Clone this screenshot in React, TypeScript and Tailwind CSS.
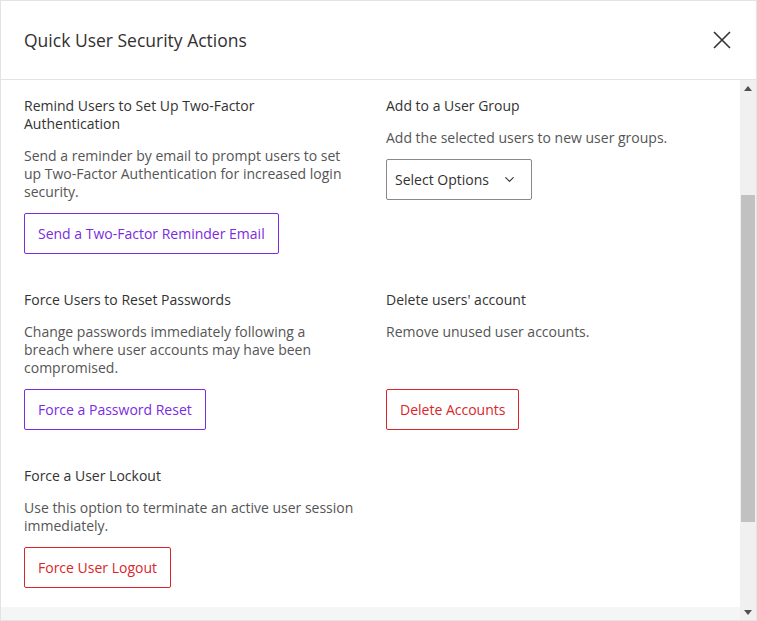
import { ChevronDown } from "lucide-react";

function Section({
  title,
  text,
  children,
  push,
}: {
  title: React.ReactNode;
  text: React.ReactNode;
  children: React.ReactNode;
  push?: boolean;
}) {
  return (
    <div className="flex flex-col">
      <h3 className="text-[14px] font-medium leading-[18px] text-[#333333]">{title}</h3>
      <p className="mt-[14px] text-[14px] leading-[18px] text-[#555555]">{text}</p>
      <div className={push ? "mt-auto pt-3" : "mt-3"}>{children}</div>
    </div>
  );
}

function OutlineButton({ label, tone }: { label: string; tone: "purple" | "red" }) {
  const cls =
    tone === "purple"
      ? "border-[#7b2be0] text-[#7b2be0]"
      : "border-[#d9262b] text-[#d9262b]";
  return (
    <button className={`h-[41px] rounded-[2px] border bg-white px-[13px] text-[14px] ${cls}`}>
      {label}
    </button>
  );
}

function Scrollbar() {
  return (
    <div className="flex w-[16px] flex-col bg-[#f0f0f0]">
      <div className="flex h-[16px] items-center justify-center">
        <svg width="8" height="5" viewBox="0 0 8 5">
          <path d="M0 5 L4 0 L8 5 Z" fill="#505050" />
        </svg>
      </div>
      <div className="flex-1 px-[1px]">
        <div className="mt-[99px] h-[327px] bg-[#c1c1c1]" />
      </div>
      <div className="flex h-[16px] items-center justify-center">
        <svg width="8" height="5" viewBox="0 0 8 5">
          <path d="M0 0 L8 0 L4 5 Z" fill="#505050" />
        </svg>
      </div>
    </div>
  );
}

export default function App() {
  return (
    <div
      className="flex h-[621px] w-[757px] flex-col border border-[#e3e3e3] bg-white"
      style={{ fontFamily: '"Segoe UI", "Open Sans", sans-serif' }}
    >
      <header className="flex h-[79px] shrink-0 items-center justify-between border-b border-[#e3e3e3] pl-[23px] pr-[25px]">
        <h2 className="text-[17.5px] font-medium text-[#323130]">Quick User Security Actions</h2>
        <svg width="18" height="18" viewBox="0 0 18 18" className="text-[#323130]">
          <path d="M1 1 L17 17 M17 1 L1 17" stroke="currentColor" strokeWidth="1.6" fill="none" />
        </svg>
      </header>

      <div className="flex min-h-0 flex-1">
        <div className="flex flex-1 flex-col">
          <div className="flex-1 px-[23px] pt-[17px]">
            <div className="grid grid-cols-[330px_1fr] gap-x-8 gap-y-[37px]">
              <Section
                title={
                  <>
                    Remind Users to Set Up Two-Factor
                    <br />
                    Authentication
                  </>
                }
                text="Send a reminder by email to prompt users to set up Two-Factor Authentication for increased login security."
              >
                <OutlineButton label="Send a Two-Factor Reminder Email" tone="purple" />
              </Section>

              <Section title="Add to a User Group" text="Add the selected users to new user groups.">
                <button className="flex h-[41px] w-[146px] items-center justify-between rounded-[2px] border border-[#8a8886] bg-white pl-2 pr-[14px] text-[14px] text-[#323130]">
                  Select Options
                  <ChevronDown size={15} strokeWidth={1.75} />
                </button>
              </Section>

              <Section
                title="Force Users to Reset Passwords"
                text={
                  <>
                    Change passwords immediately following a
                    <br />
                    breach where user accounts may have been compromised.
                  </>
                }
              >
                <OutlineButton label="Force a Password Reset" tone="purple" />
              </Section>

              <Section title="Delete users' account" text="Remove unused user accounts." push>
                <OutlineButton label="Delete Accounts" tone="red" />
              </Section>

              <Section
                title="Force a User Lockout"
                text="Use this option to terminate an active user session immediately."
              >
                <OutlineButton label="Force User Logout" tone="red" />
              </Section>
            </div>
          </div>
          <div className="h-[13px] bg-[#f4f5f5]" />
        </div>
        <Scrollbar />
      </div>
    </div>
  );
}
